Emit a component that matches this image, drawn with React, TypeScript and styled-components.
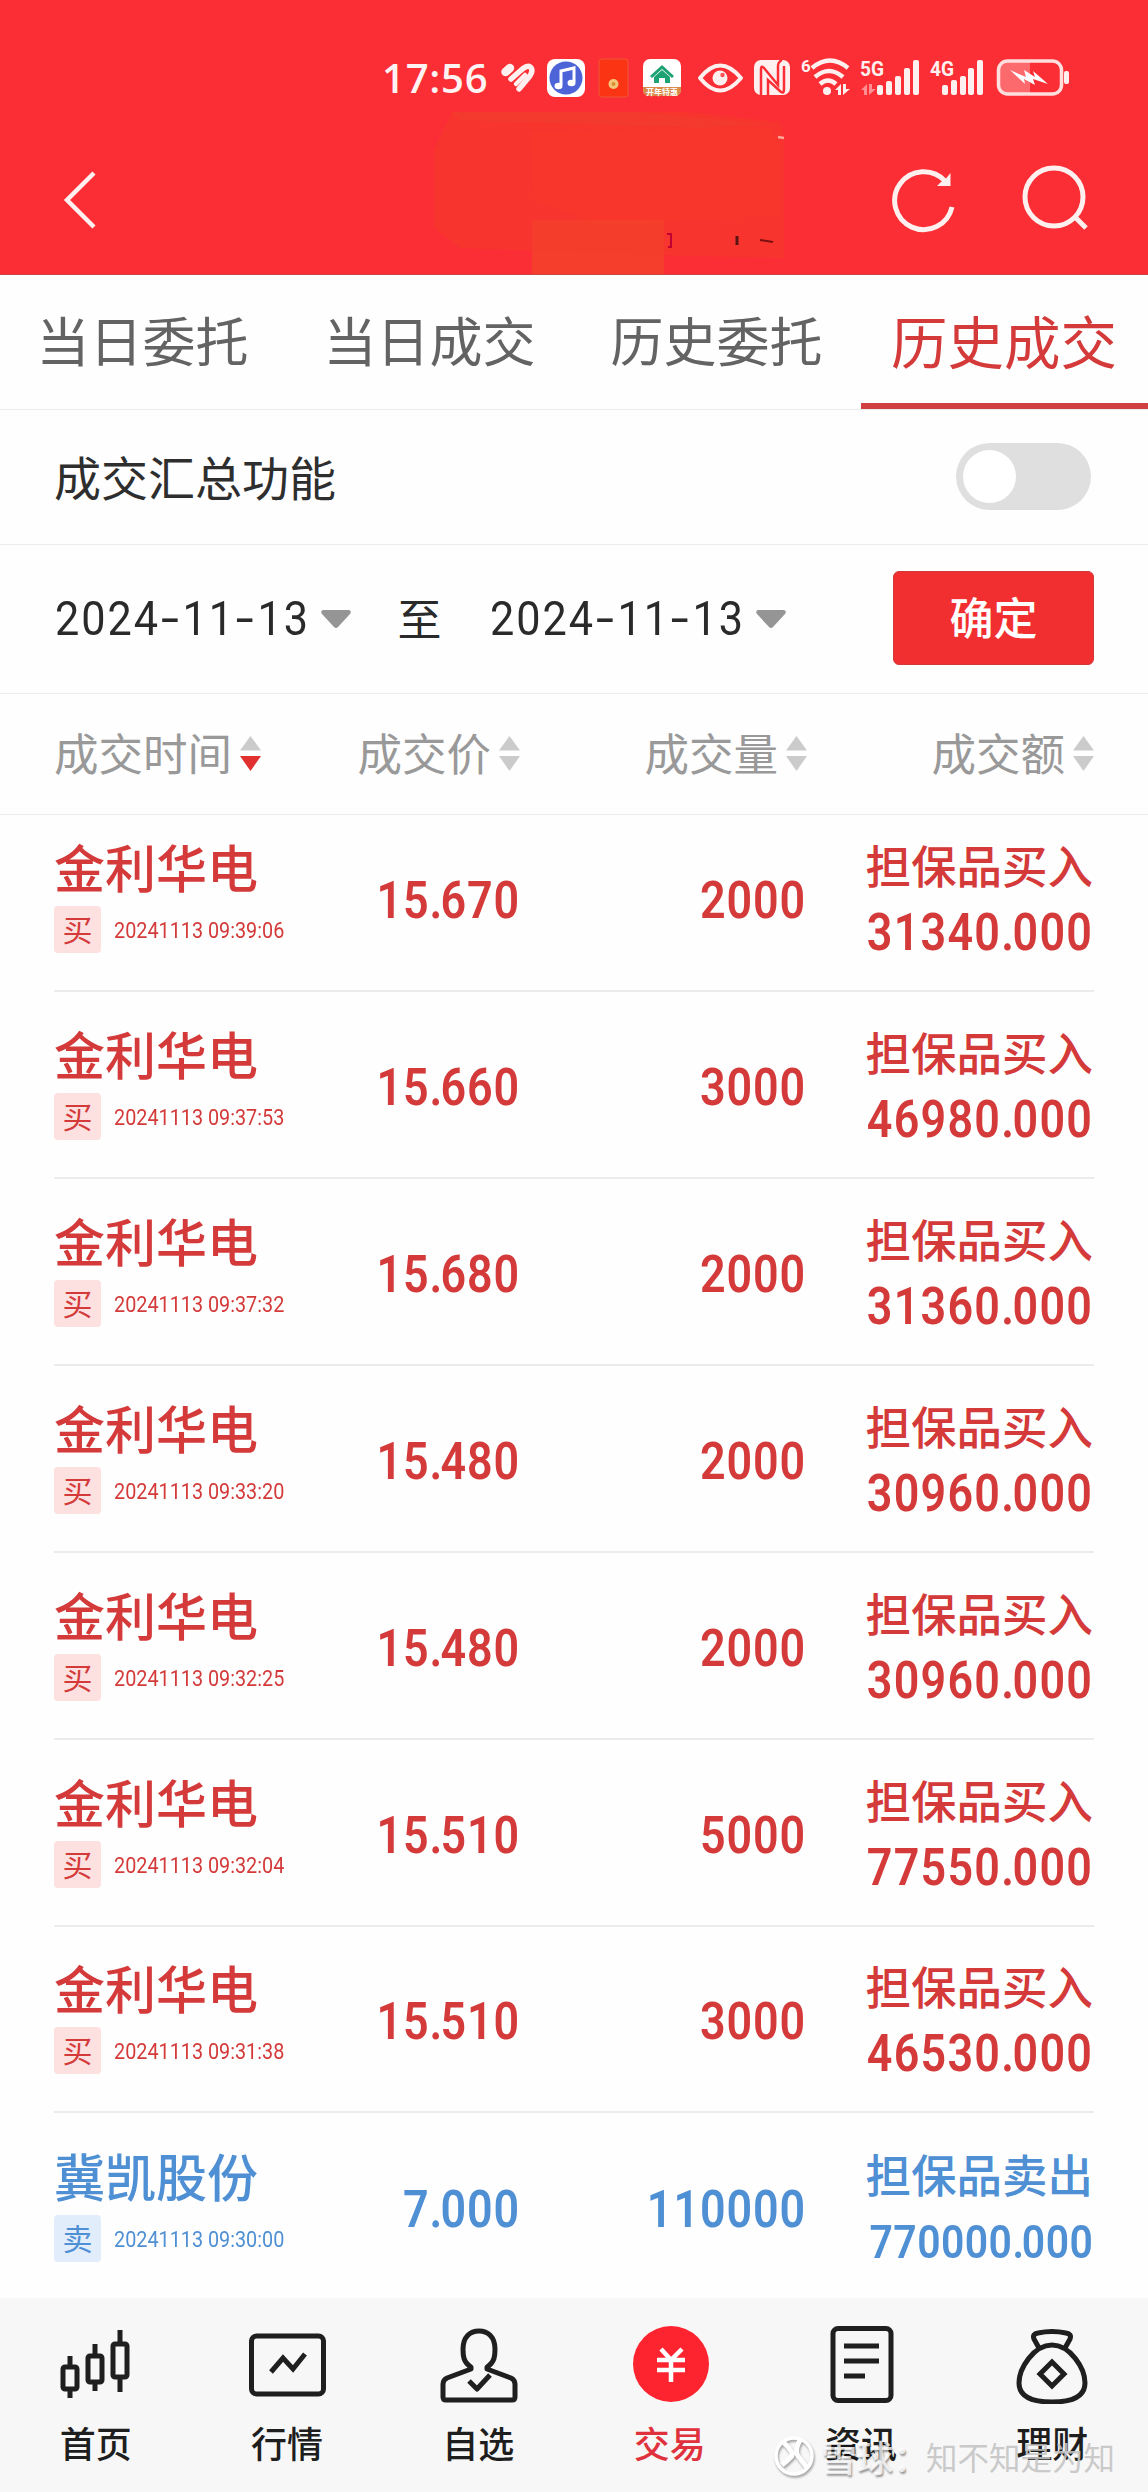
import React from "react";
import styled, { createGlobalStyle, css } from "styled-components";

const Global = createGlobalStyle`
  * { box-sizing: border-box; }
  body { margin: 0; background: #fff; font-family: "Noto Sans CJK SC", "Noto Sans", sans-serif; }
`;

const RED = "#d33a39";
const BLUE = "#4f8fd3";
const DIGITS = `Roboto, "Noto Sans CJK SC", sans-serif`;

const Page = styled.div`
  width: 1148px;
  height: 2492px;
  display: flex;
  flex-direction: column;
  background: #fefefe;
  overflow: hidden;
`;

const Top = styled.header`
  height: 275px;
  background: #fa2e34;
  border-bottom: 1px solid #c94444;
  display: flex;
  flex-direction: column;
`;

const StatusBar = styled.div`
  height: 124px;
  padding-top: 48px;
  padding-left: 382px;
  display: flex;
  align-items: flex-start;
  color: #fff2f2;
`;

const Clock = styled.div`
  width: 118px;
  height: 60px;
  font: 600 40px/60px "Open Sans", sans-serif;
  letter-spacing: 0.8px;
  white-space: nowrap;
`;

const StatusIcons = styled.svg`
  display: block;
  width: 576px;
  height: 60px;
  flex: none;
`;

const TitleBar = styled.div`
  flex: 1;
  display: flex;
  align-items: flex-start;
  padding: 0 58px 0 60px;
`;

const BackIcon = styled.svg`
  width: 40px;
  height: 64px;
  margin-top: 44px;
`;

const Smudge = styled.svg`
  width: 366px;
  height: 162px;
  margin-left: 330px;
  margin-top: -12px;
`;

const Actions = styled.div`
  margin-left: auto;
  margin-top: 40px;
  display: flex;
  gap: 61px;
`;

const ActionIcon = styled.svg`
  width: 70px;
  height: 70px;
`;

const Tabs = styled.nav`
  height: 135px;
  display: grid;
  grid-template-columns: repeat(4, 1fr);
  border-bottom: 1px solid #ececec;
`;

const Tab = styled.div<{ $active?: boolean }>`
  display: flex;
  align-items: center;
  justify-content: center;
  padding: 0 2px 5px 0;
  font-size: 53px;
  color: #636363;
  ${(p) =>
    p.$active &&
    css`
      font-size: 56.5px;
      color: ${RED};
      border-bottom: 6px solid #cf4040;
      padding: 0 1px 0 0;
    `}
`;

const SummaryRow = styled.div`
  height: 135px;
  padding: 0 57px 0 54px;
  display: flex;
  align-items: center;
  justify-content: space-between;
  border-bottom: 1px solid #ececec;
  font-size: 47px;
  color: #2e2e2e;
`;

const SummaryLabel = styled.span`
  padding-bottom: 3px;
`;

const Toggle = styled.div`
  width: 135px;
  height: 67px;
  border-radius: 34px;
  background: #dfdfdf;
  padding: 7px;
`;

const Knob = styled.div`
  width: 53px;
  height: 53px;
  border-radius: 50%;
  background: #fff;
`;

const DateRow = styled.div`
  height: 149px;
  padding: 0 54px;
  display: flex;
  align-items: center;
  border-bottom: 1px solid #ececec;
  color: #2a2a2a;
`;

const DateField = styled.div`
  width: 297px;
  padding-left: 1px;
  display: flex;
  align-items: center;
  justify-content: space-between;
`;

const DateText = styled.div`
  width: 254px;
  padding-top: 1px;
  font: 400 48px/60px ${DIGITS};
  letter-spacing: 2.2px;
  white-space: nowrap;
  transform: scaleX(0.9);
  transform-origin: left center;
`;

const Dash = styled.span`
  display: inline-block;
  width: 25px;
  text-align: center;
  transform: scaleX(1.5);
`;

const Caret = styled.svg`
  width: 30px;
  height: 18px;
`;

const To = styled.div`
  width: 138px;
  padding: 0 1px 3px 0;
  text-align: center;
  font-size: 44px;
`;

const Confirm = styled.button`
  margin-left: auto;
  width: 201px;
  height: 94px;
  margin-bottom: 2px;
  border: 1px solid #d23a3a;
  border-radius: 6px;
  background: #f22f30;
  color: #fff;
  font: 500 44px "Noto Sans CJK SC", sans-serif;
  padding: 0 0 4px;
`;

const TableHead = styled.div`
  padding: 0 54px;
  display: grid;
  grid-template-columns: 209px 257px 287px 287px;
  height: 122px;
  align-items: center;
  border-bottom: 1px solid #ececec;
  color: #999;
`;

const HeadCell = styled.div<{ $first?: boolean }>`
  display: flex;
  align-items: center;
  justify-content: ${(p) => (p.$first ? "flex-start" : "flex-end")};
  gap: 8px;
  padding-bottom: 2px;
  white-space: nowrap;
  font-size: 44.5px;
`;

const HeadLabel = styled.span`
  padding-bottom: 3px;
`;

const SortIcon = styled.svg`
  width: 21px;
  height: 36px;
  flex: none;
`;

const Trade = styled.article<{ $sell?: boolean; $first?: boolean; $last?: boolean }>`
  height: ${(p) => (p.$first ? 177 : p.$last ? 185 : 187)}px;
  margin: 0 54px;
  padding-bottom: ${(p) => (p.$last ? 36 : 37)}px;
  display: grid;
  grid-template-columns: 264px 202px 286px 287px;
  align-items: end;
  border-bottom: ${(p) => (p.$last ? "none" : "2px solid #ebebeb")};
  color: ${(p) => (p.$sell ? BLUE : RED)};
`;

const NameCell = styled.div`
  display: flex;
  flex-direction: column;
  gap: 10px;
`;

const Name = styled.div`
  font-size: 51px;
  font-weight: 500;
  line-height: 60px;
  white-space: nowrap;
`;

const Meta = styled.div`
  display: flex;
  align-items: center;
  gap: 13px;
`;

const Badge = styled.div<{ $sell?: boolean }>`
  width: 47px;
  height: 47px;
  border-radius: 4px;
  background: ${(p) => (p.$sell ? "#e2edfb" : "#fde0e0")};
  font-size: 30px;
  line-height: 45px;
  text-align: center;
  flex: none;
`;

const Time = styled.div`
  font: 400 22.5px/30px ${DIGITS};
  padding-top: 1px;
  white-space: nowrap;
  transform: scaleX(0.88);
  transform-origin: left center;
`;

const Num = styled.div<{ $size?: number; $spacing?: number }>`
  font: 600 ${(p) => p.$size ?? 51}px/60px ${DIGITS};
  letter-spacing: ${(p) => p.$spacing ?? 1}px;
  white-space: nowrap;
  text-align: right;
  transform: scaleX(0.88);
  transform-origin: right center;
`;

const Point = styled.span`
  margin-right: -3px;
`;

const MidCell = styled.div`
  padding-bottom: 22px;
`;

const AmountCell = styled.div`
  display: flex;
  flex-direction: column;
  align-items: flex-end;
`;

const Kind = styled.div`
  font-size: 45.5px;
  font-weight: 500;
  line-height: 60px;
  white-space: nowrap;
`;

const AmountNum = styled.div`
  margin: 9px 0 -10px;
`;

const Nav = styled.footer`
  position: relative;
  height: 194px;
  background: #f7f7f7;
  display: grid;
  grid-template-columns: repeat(6, 1fr);
`;

const NavItem = styled.div<{ $active?: boolean }>`
  display: flex;
  flex-direction: column;
  align-items: center;
  padding-top: 26px;
  gap: 14px;
  font-size: 36px;
  font-weight: 500;
  line-height: 48px;
  color: ${(p) => (p.$active ? "#e0323c" : "#1e1e1e")};
`;

const NavIcon = styled.svg`
  width: 80px;
  height: 80px;
  fill: none;
  stroke: #1f1f1f;
  stroke-width: 5;
`;

const Watermark = styled.div`
  position: absolute;
  left: 772px;
  top: 133px;
  display: flex;
  align-items: center;
  gap: 5px;
  color: rgba(255, 255, 255, 0.8);
  font-size: 36px;
  font-weight: 500;
  line-height: 50px;
  white-space: nowrap;
`;

const WatermarkLogo = styled.svg`
  width: 44px;
  height: 46px;
  filter: drop-shadow(1px 2px 1px rgba(0, 0, 0, 0.35));
`;

const Brand = styled.span`
  width: 100px;
  text-shadow: 1px 2px 2px rgba(0, 0, 0, 0.4);
`;

const Author = styled.span`
  font-size: 31.5px;
  font-weight: 400;
  color: rgba(196, 196, 196, 0.9);
`;

function Sort({ active }: { active?: boolean }) {
  return (
    <SortIcon viewBox="0 0 21 36">
      <path d="M10.5 1L21 15.500H0z" fill="#cbcbcb" />
      <path d="M10.5 36L21 21H0z" fill={active ? "#e03030" : "#cbcbcb"} />
    </SortIcon>
  );
}

function DateInput({ value }: { value: string }) {
  const parts = value.split("-");
  return (
    <DateField>
      <DateText>
        {parts.map((p, i) => (
          <React.Fragment key={i}>
            {i > 0 && <Dash>-</Dash>}
            {p}
          </React.Fragment>
        ))}
      </DateText>
      <Caret viewBox="0 0 30 18">
        <path d="M2 0H28Q31 1 29 4L17 17Q15 19 13 17L1 4Q-1 1 2 0Z" fill="#959595" />
      </Caret>
    </DateField>
  );
}

function Decimal({ value }: { value: string }) {
  const [whole, fraction] = value.split(".");
  return (
    <>
      {whole}
      <Point>.</Point>
      {fraction}
    </>
  );
}

const trades = [
  ["15.670", "2000", "09:39:06", "31340.000"],
  ["15.660", "3000", "09:37:53", "46980.000"],
  ["15.680", "2000", "09:37:32", "31360.000"],
  ["15.480", "2000", "09:33:20", "30960.000"],
  ["15.480", "2000", "09:32:25", "30960.000"],
  ["15.510", "5000", "09:32:04", "77550.000"],
  ["15.510", "3000", "09:31:38", "46530.000"],
  ["7.000", "110000", "09:30:00", "770000.000"],
];

export default function App() {
  return (
    <Page>
      <Global />
      <Top>
        <StatusBar>
          <Clock>17:56</Clock>
          <StatusIcons viewBox="500 48 576 60">
            <g fill="none" stroke="#fff0f0" strokeLinecap="round" strokeLinejoin="round">
              <path d="M505.500 72L510 68" strokeWidth="8.500" />
              <path d="M511 79L523 68.500Q529 64 531.500 68.500Q533 72 529 77L519 89" strokeWidth="5.500" />
              <path d="M516 84L525 75" strokeWidth="4.500" />
            </g>
            <rect x="547" y="59" width="38" height="38" rx="8" fill="#fff" />
            <circle cx="566" cy="78" r="16.500" fill="#4d64d8" />
            <path d="M561 85V71L574 68V82" fill="none" stroke="#fff" strokeWidth="3" />
            <ellipse cx="558.500" cy="86" rx="4" ry="3.300" fill="#fff" />
            <ellipse cx="571.500" cy="83" rx="4" ry="3.300" fill="#fff" />
            <rect x="599" y="59" width="29" height="38" rx="3" fill="#fb3413" stroke="#f05638" />
            <circle cx="613.500" cy="84" r="5" fill="#f3c77a" />
            <circle cx="613.500" cy="84" r="2" fill="#d89030" />
            <rect x="643" y="59" width="38" height="37" rx="7" fill="#fff" />
            <path d="M650 76L662 65L674 76L672 78L662 69L652 78ZM654 77L662 70L670 77V83H665V78H659V83H654Z" fill="#1ca273" />
            <path d="M643 87H681V90Q681 96 674 96H650Q643 96 643 90Z" fill="#d98a4a" />
            <text x="662" y="95" fontSize="8" fontWeight="700" textAnchor="middle" fill="#fff">开年特惠</text>
            <path d="M700 78Q720 53 741 78Q720 103 700 78Z" fill="none" stroke="#fff0f0" strokeWidth="4" strokeLinejoin="round" />
            <circle cx="720" cy="78" r="7.500" fill="#fff0f0" />
            <circle cx="722.500" cy="75" r="2.200" fill="#fb5055" />
            <rect x="754" y="60" width="36" height="35" rx="7" fill="#fff0f0" />
            <path d="M761 95V69Q761 65 764 68L778 85V66Q778 62 782 60" fill="none" stroke="#fa2e34" strokeWidth="2.500" />
            <path d="M768 95V80L781 92Q784 94 784 89V66" fill="none" stroke="#fa2e34" strokeWidth="2.500" />
            <text x="801" y="72" fontSize="17" fontWeight="700" fontFamily="Roboto" fill="#fff0f0">6</text>
            <g fill="none" stroke="#fff0f0" strokeWidth="4.500">
              <path d="M812 68Q830 53 848 68" />
              <path d="M815 77Q829 65 843 77" />
              <path d="M820 84Q828 77 836 84" />
            </g>
            <circle cx="827" cy="91" r="4" fill="#fff0f0" />
            <path d="M835 90L841 84V95H838V90ZM843 84H846V89H850L843 95Z" fill="#fff0f0" />
            <text x="860" y="76" fontSize="21" fontWeight="700" fontFamily="Roboto" textLength="24" lengthAdjust="spacingAndGlyphs" fill="#fff0f0">5G</text>
            <path d="M861 90L867 84V95H864V90ZM869 84H872V89H876L869 95Z" fill="#ff8f92" />
            <g fill="#fff0f0">
              <rect x="877" y="85" width="6" height="10" rx="2" />
              <rect x="886" y="81" width="6" height="14" rx="2" />
              <rect x="895" y="76" width="6" height="19" rx="2" />
              <rect x="904" y="68" width="6" height="27" rx="2" />
              <rect x="913" y="60" width="6" height="35" rx="2" />
              <rect x="942" y="85" width="6" height="10" rx="2" />
              <rect x="951" y="80" width="6" height="15" rx="2" />
              <rect x="960" y="76" width="6" height="19" rx="2" />
              <rect x="968" y="68" width="6" height="27" rx="2" />
              <rect x="977" y="60" width="6" height="35" rx="2" />
            </g>
            <text x="930" y="76" fontSize="21" fontWeight="700" fontFamily="Roboto" textLength="24" lengthAdjust="spacingAndGlyphs" fill="#fff0f0">4G</text>
            <path d="M1007 61H1030V94H1007Q999 94 999 86V69Q999 61 1007 61Z" fill="#fc6a6e" />
            <rect x="998.500" y="61" width="63" height="33" rx="9" fill="none" stroke="#ffdede" strokeWidth="3.500" />
            <rect x="1064" y="71" width="5" height="13" rx="2" fill="#fff0f0" />
            <path d="M1010 70L1026 77L1024 70L1035 77L1033 71L1048 84L1033 79L1035 85L1024 79L1025 84Z" fill="#fff" />
          </StatusIcons>
        </StatusBar>
        <TitleBar>
          <BackIcon viewBox="0 0 40 64" fill="none">
            <path d="M34 5L7 32L34 59" stroke="#fff0f0" strokeWidth="4.500" />
          </BackIcon>
          <Smudge viewBox="430 112 366 162">
            <path d="M452 112L650 108L780 122L784 138V258L690 256L460 248L434 228V150Z" fill="#f6382c" opacity="0.7" />
            <path d="M530 130L770 128L780 150V215L600 225L535 200Z" fill="#fb392b" opacity="0.45" />
            <path d="M452 112L640 112L770 124L700 128L460 120Z" fill="#f0402f" opacity="0.5" />
            <rect x="532" y="220" width="132" height="54" fill="#f3412a" opacity="0.85" />
            <path d="M667 234H671V247H668" fill="none" stroke="#c00030" strokeWidth="2" />
            <path d="M737 236V245" stroke="#5a1414" strokeWidth="3" />
            <path d="M760 240L773 242" stroke="#7a1010" strokeWidth="2" />
            <path d="M778 137L784 138" stroke="#ffa79a" strokeWidth="2.500" />
          </Smudge>
          <Actions>
            <ActionIcon viewBox="0 0 70 70" fill="none" stroke="#fff0f0" strokeWidth="5">
              <path d="M63 43A29 29 0 1 1 56 17" />
              <path d="M61.500 9V22H48L52 18L55 17Z" fill="#fff0f0" stroke="none" />
            </ActionIcon>
            <ActionIcon viewBox="0 0 70 70" fill="none" stroke="#fff0f0" strokeWidth="5">
              <circle cx="34" cy="33" r="29" />
              <path d="M54 52L66 64" />
            </ActionIcon>
          </Actions>
        </TitleBar>
      </Top>

      <Tabs>
        <Tab>当日委托</Tab>
        <Tab>当日成交</Tab>
        <Tab>历史委托</Tab>
        <Tab $active>历史成交</Tab>
      </Tabs>

      <SummaryRow>
        <SummaryLabel>成交汇总功能</SummaryLabel>
        <Toggle>
          <Knob />
        </Toggle>
      </SummaryRow>

      <DateRow>
        <DateInput value="2024-11-13" />
        <To>至</To>
        <DateInput value="2024-11-13" />
        <Confirm>确定</Confirm>
      </DateRow>

      <TableHead>
        <HeadCell $first>
          <HeadLabel>成交时间</HeadLabel>
          <Sort active />
        </HeadCell>
        {["成交价", "成交量", "成交额"].map((label) => (
          <HeadCell key={label}>
            <HeadLabel>{label}</HeadLabel>
            <Sort />
          </HeadCell>
        ))}
      </TableHead>

      {trades.map(([price, volume, time, amount], i) => {
        const sell = i === 7;
        return (
          <Trade key={time} $sell={sell} $first={i === 0} $last={sell}>
            <NameCell>
              <Name>{sell ? "冀凯股份" : "金利华电"}</Name>
              <Meta>
                <Badge $sell={sell}>{sell ? "卖" : "买"}</Badge>
                <Time>20241113 {time}</Time>
              </Meta>
            </NameCell>
            <MidCell>
              <Num>
                <Decimal value={price} />
              </Num>
            </MidCell>
            <MidCell>
              <Num>{volume}</Num>
            </MidCell>
            <AmountCell>
              <Kind>{sell ? "担保品卖出" : "担保品买入"}</Kind>
              <AmountNum>
                <Num $size={sell ? 46.5 : 51} $spacing={sell ? 0.5 : 1.4}>
                  <Decimal value={amount} />
                </Num>
              </AmountNum>
            </AmountCell>
          </Trade>
        );
      })}

      <Nav>
        <NavItem>
          <NavIcon viewBox="0 0 80 80">
            <rect x="7" y="43" width="14" height="22" rx="2" />
            <rect x="32" y="32" width="14" height="26" rx="2" />
            <rect x="57" y="20" width="14" height="33" rx="2" />
            <path d="M14 32V43M14 65V74M39 20V32M39 58V67M64 6V20M64 53V68" />
          </NavIcon>
          首页
        </NavItem>
        <NavItem>
          <NavIcon viewBox="0 0 80 80">
            <rect x="4.500" y="12" width="72" height="58" rx="5" />
            <path d="M24 48L36 34L46 45L58 30" />
          </NavIcon>
          行情
        </NavItem>
        <NavItem>
          <NavIcon viewBox="0 0 80 80" strokeLinejoin="round">
            <path d="M33 43C25 38 25 31 25 25C25 13 32 7 41 7S57 13 57 25C57 31 57 38 49 43V45L73 54Q77 56 77 60V73Q77 76 74 76H8Q5 76 5 73V60Q5 56 9 54L33 45Z" />
            <path d="M31 57L39 65L52 51" />
          </NavIcon>
          自选
        </NavItem>
        <NavItem $active>
          <NavIcon viewBox="0 0 80 80">
            <circle cx="41" cy="40" r="38" fill="#fd2430" stroke="none" />
            <path d="M31 25L41 36L52 25M27 36H55M27 46H55M41 36V58" stroke="#fff" strokeWidth="4.500" />
          </NavIcon>
          交易
        </NavItem>
        <NavItem>
          <NavIcon viewBox="0 0 80 80">
            <rect x="12" y="4.500" width="58" height="72" rx="5" />
            <path d="M23 22H58M23 37H58M23 52H44" />
          </NavIcon>
          资讯
        </NavItem>
        <NavItem>
          <NavIcon viewBox="0 0 80 80" strokeLinejoin="round">
            <path d="M27 24L22 15Q20 10 26 9Q40 6 54 9Q60 10 58 15L53 24" />
            <path d="M40 21C22 21 7 44 7 59Q7 78 40 78T73 59C73 44 58 21 40 21Z" />
            <path d="M40 38L52 50L40 62L28 50Z" strokeLinejoin="miter" />
          </NavIcon>
          理财
        </NavItem>
        <Watermark>
          <WatermarkLogo viewBox="0 0 44 46" fill="none" stroke="#fff" strokeWidth="3.500">
            <circle cx="22" cy="23" r="18" />
            <path d="M12 10Q23 20 19 24T10 32M28 7Q22 18 26 23T36 36" strokeWidth="5" />
          </WatermarkLogo>
          <Brand>雪球：</Brand>
          <Author>知不知是为知</Author>
        </Watermark>
      </Nav>
    </Page>
  );
}
